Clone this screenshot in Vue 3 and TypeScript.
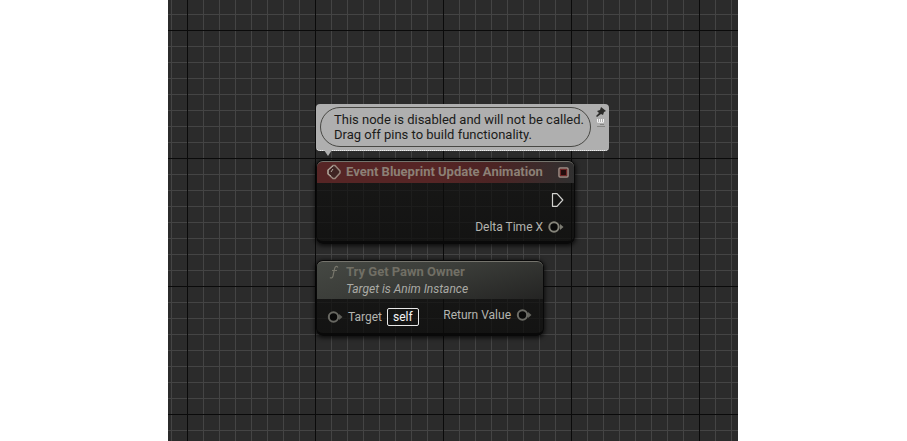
<script setup lang="ts">
interface Point {
  left: string
  top: string
}

const place = (x: number, y: number): Point => ({ left: `${x}px`, top: `${y}px` })

const commentAt = place(148, 104)
const eventAt = place(148, 160)
const functionAt = place(148, 260)
</script>

<template>
  <div class="page">
    <main class="graph">
      <aside class="comment" :style="commentAt">
        <p class="comment-text">
          This node is disabled and will not be called.<br />
          Drag off pins to build functionality.
        </p>
        <div class="comment-tools">
          <button type="button" class="tool" aria-label="Pin comment">
            <svg width="10" height="10" viewBox="0 0 10 10">
              <path d="M5 0L10 4L8 5L7 8L5 7L1 10L0 9L3 6L1 4L4 3Z" fill="#2c2c2a" />
            </svg>
          </button>
          <button type="button" class="tool" aria-label="Edit comment">
            <svg width="10" height="9" viewBox="0 0 10 9">
              <path d="M1.5 0V3L2.5 4L3.5 3V0M3.5 3L4.5 4L5.5 3V0M5.5 3L6.5 4L7.5 3V0" stroke="#f4f4f4" fill="none" />
              <path d="M4 5.5H8M1 7.5H9" stroke="#858583" />
            </svg>
          </button>
        </div>
      </aside>

      <section class="node event" :style="eventAt">
        <header class="head event-head">
          <svg class="icon" width="16" height="16" viewBox="0 0 16 16">
            <path d="M7 1.5L2 6V10L7 14.5H9L14 9V7L9 1.5Z" fill="#3f2423" stroke="#97867c" stroke-width="1.5" />
            <path d="M7 2L2 6V10L5 12M7 5L5 8" fill="none" stroke="#b5aaa0" />
          </svg>
          <h2 class="title">Event Blueprint Update Animation</h2>
          <svg class="delegate" width="11" height="11" viewBox="0 0 11 11">
            <rect x="1" y="1" width="9" height="9" rx="1" fill="#240d0d" stroke="#a18c84" stroke-width="1.5" />
            <rect x="2.5" y="2.5" width="6" height="6" fill="none" stroke="#6e2525" />
          </svg>
        </header>
        <div class="row exec-row">
          <svg width="13" height="14" viewBox="0 0 13 14">
            <path d="M1.5 .7H6L11.8 7L6 13.3H1.5Z" fill="#141413" stroke="#d2d2cf" stroke-width="1.2" stroke-linejoin="round" />
          </svg>
        </div>
        <div class="row value-row">
          <span>Delta Time X</span>
          <svg width="16" height="12" viewBox="0 0 16 12">
            <path d="M12 3L15.5 6L12 9Z" fill="#7c7b72" />
            <circle cx="6" cy="6" r="4.7" fill="#090909" stroke="#85847a" stroke-width="2" />
          </svg>
        </div>
      </section>

      <section class="node function" :style="functionAt">
        <header class="head function-head">
          <svg class="icon" width="16" height="16" viewBox="0 0 16 16">
            <path d="M12 3.5C10.5 1.5 9 2.5 8.5 5L7 12C6.5 14 5 14.5 4 13.5M6 6.5H11" fill="none" stroke="#77766b" stroke-width="1.2" />
          </svg>
          <div>
            <h2 class="title muted">Try Get Pawn Owner</h2>
            <p class="subtitle">Target is Anim Instance</p>
          </div>
        </header>
        <div class="pins">
          <div class="pin input-pin">
            <svg width="16" height="12" viewBox="0 0 16 12">
              <path d="M12 3L15.5 6L12 9Z" fill="#5e5e59" />
              <circle cx="6.5" cy="6" r="4.7" fill="#090909" stroke="#686862" stroke-width="2" />
            </svg>
            <span>Target</span>
            <span class="self">self</span>
          </div>
          <div class="pin output-pin">
            <span>Return Value</span>
            <svg width="16" height="12" viewBox="0 0 16 12">
              <path d="M12 3L15.5 6L12 9Z" fill="#64645e" />
              <circle cx="6.5" cy="6" r="4.7" fill="#090909" stroke="#6c6c66" stroke-width="2" />
            </svg>
          </div>
        </div>
      </section>
    </main>
  </div>
</template>

<style>
body {
  margin: 0;
  background: #fff;
}
</style>

<style scoped>
.page {
  box-sizing: border-box;
  min-height: 100vh;
  padding: 0 169px 0 168px;
  display: flex;
  font-family: Roboto, "Liberation Sans", sans-serif;
}
.graph {
  position: relative;
  flex: 1;
  overflow: hidden;
  background-color: #2b2b2b;
  background-image:
    linear-gradient(90deg, #0a0a0a 1px, transparent 1px),
    linear-gradient(#0a0a0a 1px, transparent 1px),
    linear-gradient(90deg, #444 1px, transparent 1px),
    linear-gradient(#444 1px, transparent 1px);
  background-size: 128px 128px, 128px 128px, 16px 16px, 16px 16px;
  background-position: 19px 30px, 19px 30px, 3px 14px, 3px 14px;
}
.comment {
  position: absolute;
  box-sizing: border-box;
  display: flex;
  gap: 5px;
  padding: 3px 3px 3px 4px;
  border-radius: 4px;
  border-bottom: 1px dotted #fff;
  background: #afafaf;
}
.comment::after {
  content: "";
  position: absolute;
  left: 8px;
  top: 100%;
  border: 4px solid transparent;
  border-top: 6px solid #afafaf;
  border-bottom: 0;
}
.comment-text {
  box-sizing: border-box;
  margin: 0;
  padding: 4px 6px 4px 13px;
  border: 1px solid #484844;
  border-radius: 20px;
  color: #1b1b19;
  font-size: 13px;
  line-height: 15px;
  white-space: nowrap;
}
.comment-tools {
  display: flex;
  flex-direction: column;
  gap: 2px;
}
.tool {
  display: flex;
  padding: 0;
  border: 0;
  background: none;
}
.node {
  position: absolute;
  box-sizing: border-box;
  border: 1px solid #090909;
  border-bottom-width: 3px;
  border-radius: 7px;
  background: linear-gradient(rgba(14, 14, 13, 0.66), rgba(12, 12, 11, 0.76));
  box-shadow: 0 1px 4px 1px rgba(0, 0, 0, 0.7);
  color: #b4b4b0;
  font-size: 12px;
  line-height: 16px;
}
.event {
  width: 259px;
  height: 84px;
}
.function {
  width: 228px;
  height: 76px;
}
.head {
  display: flex;
  box-sizing: border-box;
  padding: 2px 5px 0 9px;
  border-top: 1px solid #75746d;
  border-radius: 6px 6px 0 0;
}
.event-head {
  height: 22px;
  background: linear-gradient(90deg, #562525 0 45%, #4b2424 70%, #303030);
}
.function-head {
  height: 38px;
  background: linear-gradient(165deg, #454843, #3c3e3a 40%, #242423);
}
.icon {
  flex: none;
  margin-right: 4px;
}
.title {
  margin: 0;
  color: #8c8076;
  font-size: 13px;
  line-height: 16px;
  font-weight: 700;
  white-space: nowrap;
}
.muted {
  color: #716f65;
}
.subtitle {
  margin: 0;
  color: #aaaaa5;
  font-size: 12px;
  line-height: 18px;
  font-style: italic;
}
.delegate {
  margin: 3px 0 0 auto;
}
.row {
  display: flex;
  align-items: center;
  justify-content: flex-end;
  gap: 5px;
}
.exec-row {
  padding: 10px 10px 0 0;
}
.value-row {
  padding: 12px 10px 0 0;
}
.pins {
  display: flex;
  justify-content: space-between;
  padding: 8px 11px 0 10px;
}
.pin {
  display: flex;
  align-items: center;
  gap: 5px;
}
.input-pin {
  height: 20px;
}
.output-pin {
  height: 16px;
}
.self {
  box-sizing: border-box;
  height: 18px;
  padding: 0 5px;
  border: 1px solid #e8e8e8;
  border-radius: 2px;
  color: #f4f4f4;
}
</style>
